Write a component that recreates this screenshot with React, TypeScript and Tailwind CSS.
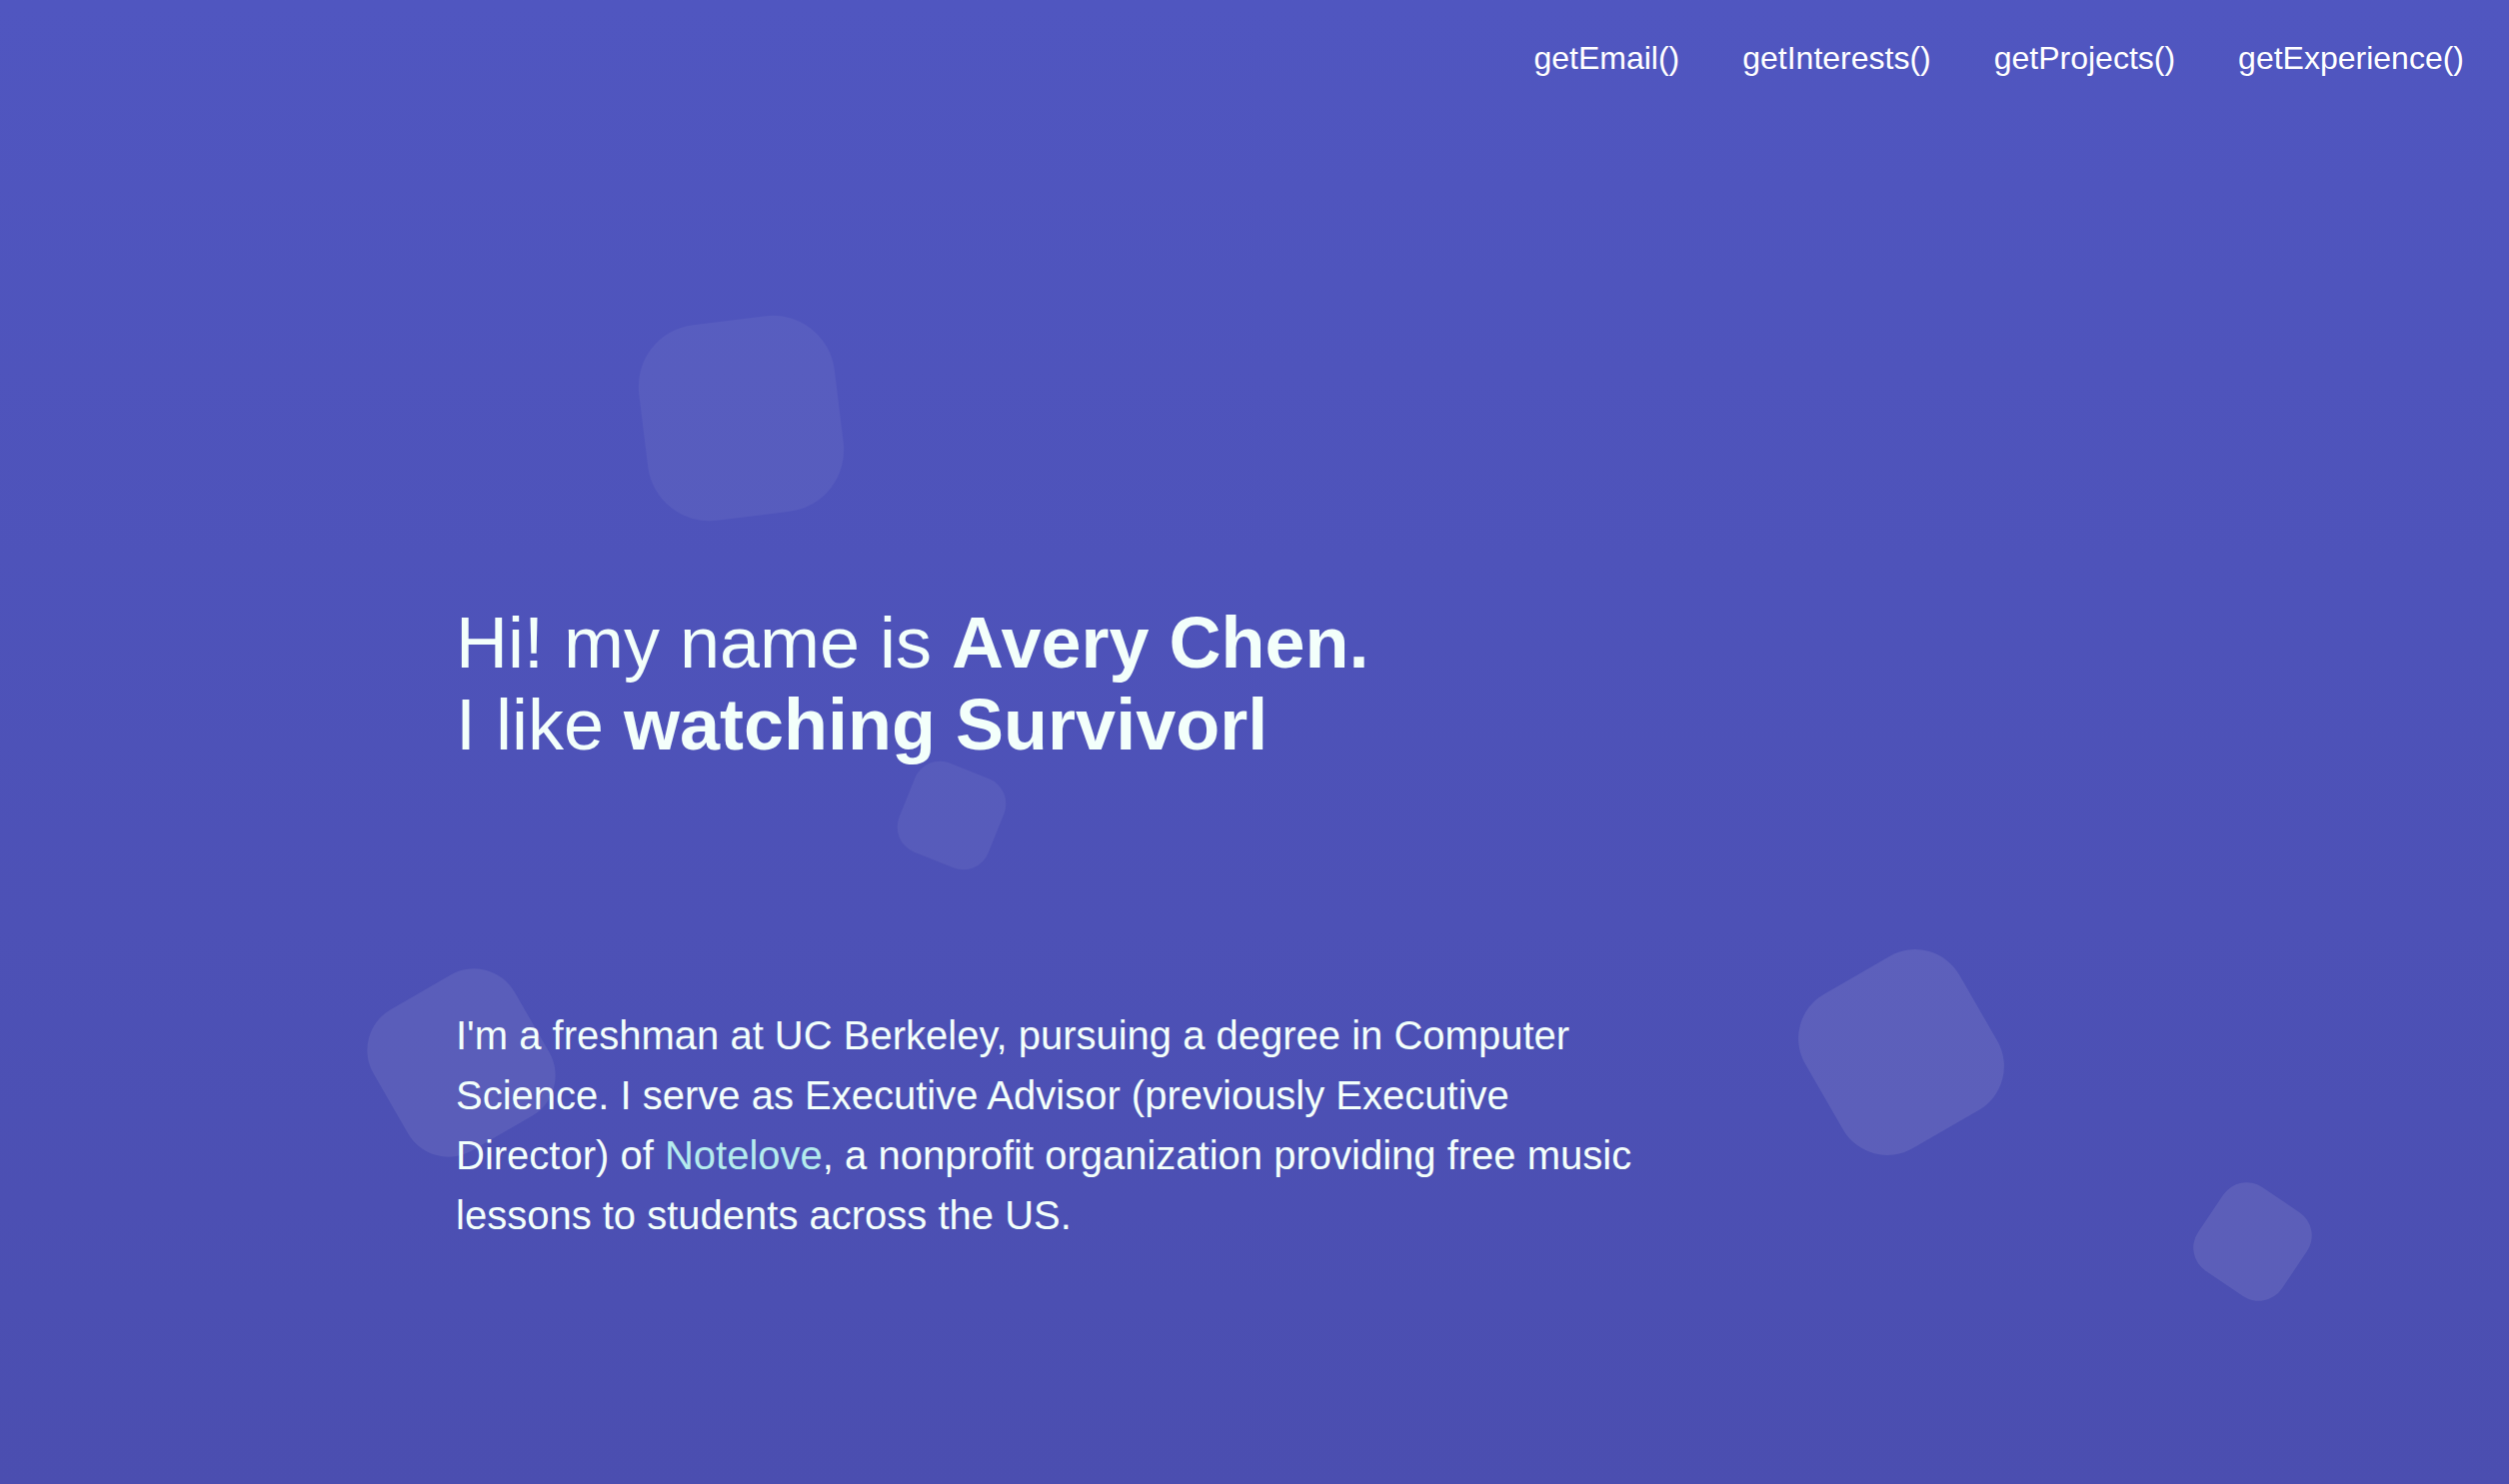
const links = ["getEmail()", "getInterests()", "getProjects()", "getExperience()"];

// floating rounded squares in the background
const blobs = [
  "left-[643px] top-[320px] h-[197px] w-[197px] rotate-[-7deg] rounded-[62px] bg-white/[0.05]",
  "left-[904px] top-[768px] h-[96px] w-[96px] rotate-[22deg] rounded-[27px] bg-white/[0.06]",
  "left-[380px] top-[982px] h-[163px] w-[163px] rotate-[-30deg] rounded-[47px] bg-white/[0.08]",
  "left-[1813px] top-[964px] h-[178px] w-[178px] rotate-[-30deg] rounded-[51px] bg-white/[0.09]",
  "left-[2203px] top-[1192px] h-[101px] w-[101px] rotate-[34deg] rounded-[28px] bg-white/[0.09]",
];

function App() {
  return (
    <div className="relative min-h-screen overflow-hidden bg-gradient-to-b from-[#5056c0] to-[#4b4eb0] font-['Liberation_Sans',Arial,sans-serif] text-[#f3fffb]">
      {blobs.map((b, i) => (
        <div key={i} className={`absolute ${b}`} />
      ))}

      <nav className="relative flex justify-end gap-[63px] pr-[45px] pt-[40px]">
        {links.map((l) => (
          <a key={l} href="#" className="text-[32px] leading-[37px] text-white">
            {l}
          </a>
        ))}
      </nav>

      <main className="relative pl-[456px] pt-[525px]">
        <h1 className="text-[72px] leading-[82px] font-normal">
          Hi! my name is <b className="font-bold">Avery Chen.</b>
          <br />
          I like <b className="font-bold">watching Survivorl</b>
        </h1>

        <p className="mt-[240px] max-w-[1200px] text-[40px] leading-[60px]">
          I'm a freshman at UC Berkeley, pursuing a degree in Computer Science. I serve as
          Executive Advisor (previously Executive Director) of{" "}
          <a href="#" className="text-[#b4ecee]">
            Notelove
          </a>
          , a nonprofit organization providing free music lessons to students across the US.
        </p>
      </main>
    </div>
  );
}

export default App;
